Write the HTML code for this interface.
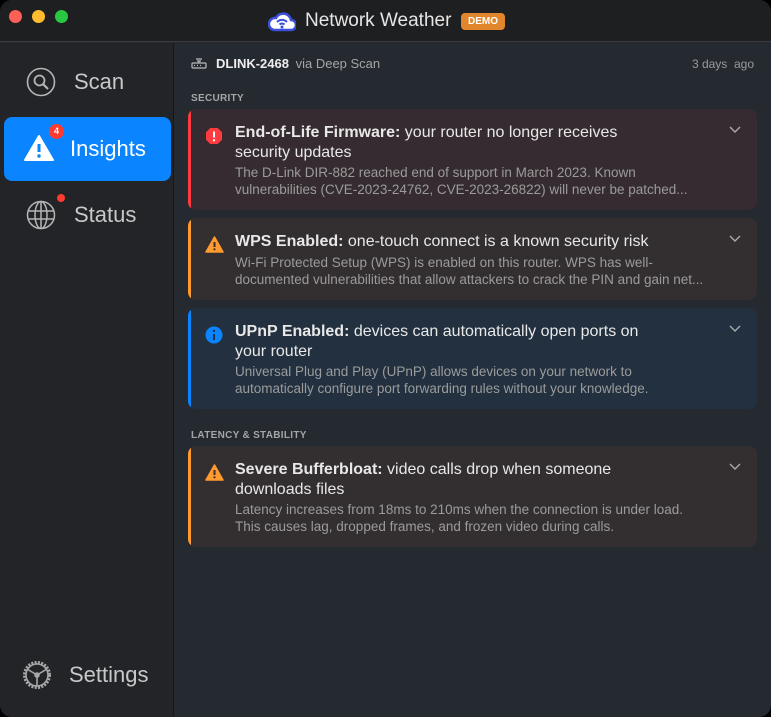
<!DOCTYPE html><html><head><style>
*{margin:0;padding:0;box-sizing:border-box}
body{width:771px;height:717px;background:#000;font-family:"Liberation Sans",sans-serif;overflow:hidden}
.win{position:absolute;left:0;top:0;width:771px;height:717px;border-radius:12px;overflow:hidden;background:#252a31}
.tb{position:absolute;left:0;top:0;width:771px;height:42px;background:#1e1f21;border-bottom:1px solid #3a3c40}
.dot{position:absolute;top:10px;width:13px;height:13px;border-radius:50%}
.side{position:absolute;left:0;top:43px;width:174px;height:674px;background:#222428;border-right:1px solid #15171a}
.item{position:absolute;left:4px;width:167px;height:64px;border-radius:8px;color:#c8c8c8;font-size:22px}
.item span{position:absolute;top:50%;transform:translateY(-50%)}
.card{position:absolute;left:188px;width:569px;border-radius:8px;overflow:hidden}
.card .bar{position:absolute;left:0;top:0;bottom:0;width:3px}
.card .t{position:absolute;left:47px;top:14px;width:500px;font-size:16px;line-height:19.5px;color:#e8e8e8;white-space:nowrap}
.card .t b{font-weight:bold}
.card .d{font-size:13.5px;line-height:17px;color:#9b9b9b;margin-top:2px}
.card .ic{position:absolute;left:17px;top:18px}
.card .ch{position:absolute;right:16px;top:17px}
.sec{position:absolute;left:191px;font-size:10px;font-weight:bold;color:#a5a5a5;letter-spacing:.3px}
</style></head><body><div class="win">
<div class="tb">
<div class="dot" style="left:9px;background:#fe5f57"></div>
<div class="dot" style="left:32px;background:#febc2e"></div>
<div class="dot" style="left:55px;background:#28c840"></div>
<svg style="position:absolute;left:268px;top:10px" width="28" height="22" viewBox="0 0 28 22"><path d="M6 20h17a5 5 0 0 0 0-10 8 8 0 0 0-15-2 6 6 0 0 0-2 12z" fill="#fff" stroke="#3b4fd8" stroke-width="2.5"/><path d="M9 12a7 7 0 0 1 10 0M11.5 14.5a3.5 3.5 0 0 1 5 0" stroke="#3b4fd8" stroke-width="2" fill="none"/><circle cx="14" cy="17" r="1.5" fill="#3b4fd8"/></svg>
<div style="position:absolute;left:305px;top:10px;font-size:19px;color:#e6e6e6">Network Weather</div>
<div style="position:absolute;left:461px;top:13px;width:44px;height:17px;background:#e2862d;border-radius:4px;color:#fff;font-size:10px;font-weight:bold;text-align:center;line-height:17px">DEMO</div>
</div>
<div class="side">
<div class="item" style="top:7px"><svg style="position:absolute;left:22px;top:17px" width="30" height="30" viewBox="0 0 30 30"><circle cx="15" cy="15" r="13.5" fill="none" stroke="#b5b5b5" stroke-width="1.6"/><circle cx="13.5" cy="13.5" r="5" fill="none" stroke="#b5b5b5" stroke-width="1.8"/><path d="M17 17l5 5" stroke="#b5b5b5" stroke-width="2.2"/></svg><span style="left:70px">Scan</span></div>
<div class="item" style="top:74px;background:#0a84ff;color:#fff"><svg style="position:absolute;left:19px;top:17px" width="32" height="28" viewBox="0 0 32 28"><path d="M16 2L30 26H2z" fill="#fff" stroke="#fff" stroke-width="2" stroke-linejoin="round"/><path d="M16 10v8" stroke="#0a84ff" stroke-width="3"/><circle cx="16" cy="22" r="1.7" fill="#0a84ff"/></svg><div style="position:absolute;left:45px;top:7px;width:15px;height:15px;border-radius:50%;background:#ff3b30;color:#fff;font-size:9px;font-weight:bold;text-align:center;line-height:15px">4</div><span style="left:66px">Insights</span></div>
<div class="item" style="top:140px"><svg style="position:absolute;left:22px;top:17px" width="30" height="30" viewBox="0 0 30 30" fill="none" stroke="#b5b5b5" stroke-width="1.5"><circle cx="15" cy="15" r="13.5"/><ellipse cx="15" cy="15" rx="6" ry="13.5"/><path d="M2 11h26M2 19h26M15 1.5v27"/></svg><div style="position:absolute;left:53px;top:11px;width:8px;height:8px;border-radius:50%;background:#ff3b30"></div><span style="left:70px">Status</span></div>
<div class="item" style="top:600px"><svg style="position:absolute;left:17px;top:16px" width="32" height="32" viewBox="0 0 32 32" fill="none" stroke="#a8a8a8" stroke-width="1.6"><circle cx="16" cy="16" r="12.5" stroke-dasharray="2 1.3" stroke-width="3"/><circle cx="16" cy="16" r="11"/><path d="M16 16L6 10M16 16l10-6M16 16v11"/><circle cx="16" cy="16" r="2" fill="#a8a8a8"/></svg><span style="left:65px">Settings</span></div>
</div>
<svg style="position:absolute;left:191px;top:56px" width="16" height="14" viewBox="0 0 16 14" fill="none" stroke="#bbb" stroke-width="1.2"><rect x="1" y="7" width="14" height="5" rx="1"/><path d="M6 5h4M5 3h6M8 7V5"/><path d="M3 9.5h1M6 9.5h1M9 9.5h1" /></svg>
<div style="position:absolute;left:216px;top:56px;font-size:13px;color:#eee"><b>DLINK-2468</b> <span style="color:#a5a5a5;margin-left:3px">via Deep Scan</span></div>
<div style="position:absolute;right:17px;top:57px;font-size:12px;color:#9a9a9a">3 days&nbsp; ago</div>
<div class="sec" style="top:93px">SECURITY</div>
<div class="card" style="top:109px;height:101px;background:#352b30"><div class="bar" style="background:#ff3b3f"></div>
<svg class="ic" width="18" height="18" viewBox="0 0 18 18"><path d="M5.3 1h7.4L17 5.3v7.4L12.7 17H5.3L1 12.7V5.3z" fill="#ff3b3f"/><path d="M9 4.5v6" stroke="#fff" stroke-width="2"/><circle cx="9" cy="13.3" r="1.2" fill="#fff"/></svg>
<div class="t"><b>End-of-Life Firmware:</b> your router no longer receives<br>security updates<div class="d">The D-Link DIR-882 reached end of support in March 2023. Known<br>vulnerabilities (CVE-2023-24762, CVE-2023-26822) will never be patched...</div></div>
<svg class="ch" width="12" height="8" viewBox="0 0 12 8"><path d="M1 1l5 5 5-5" stroke="#aaa" stroke-width="1.4" fill="none"/></svg></div>
<div class="card" style="top:218px;height:82px;background:#332f30"><div class="bar" style="background:#ff9a2e"></div>
<svg class="ic" width="19" height="17" viewBox="0 0 19 17"><path d="M9.5 1L18 16H1z" fill="#ff9a2e" stroke="#ff9a2e" stroke-linejoin="round" stroke-width="1.5"/><path d="M9.5 6v5" stroke="#332f30" stroke-width="2"/><circle cx="9.5" cy="13.3" r="1.1" fill="#332f30"/></svg>
<div class="t"><b>WPS Enabled:</b> one-touch connect is a known security risk<div class="d">Wi-Fi Protected Setup (WPS) is enabled on this router. WPS has well-<br>documented vulnerabilities that allow attackers to crack the PIN and gain net...</div></div>
<svg class="ch" width="12" height="8" viewBox="0 0 12 8"><path d="M1 1l5 5 5-5" stroke="#aaa" stroke-width="1.4" fill="none"/></svg></div>
<div class="card" style="top:308px;height:101px;background:#22303f"><div class="bar" style="background:#0a84ff"></div>
<svg class="ic" width="18" height="18" viewBox="0 0 18 18"><circle cx="9" cy="9" r="8.5" fill="#0a84ff"/><path d="M9 8v6" stroke="#22303f" stroke-width="2"/><circle cx="9" cy="5" r="1.2" fill="#22303f"/></svg>
<div class="t"><b>UPnP Enabled:</b> devices can automatically open ports on<br>your router<div class="d">Universal Plug and Play (UPnP) allows devices on your network to<br>automatically configure port forwarding rules without your knowledge.</div></div>
<svg class="ch" width="12" height="8" viewBox="0 0 12 8"><path d="M1 1l5 5 5-5" stroke="#aaa" stroke-width="1.4" fill="none"/></svg></div>
<div class="sec" style="top:430px">LATENCY &amp; STABILITY</div>
<div class="card" style="top:446px;height:101px;background:#332f30"><div class="bar" style="background:#ff9a2e"></div>
<svg class="ic" width="19" height="17" viewBox="0 0 19 17"><path d="M9.5 1L18 16H1z" fill="#ff9a2e" stroke="#ff9a2e" stroke-linejoin="round" stroke-width="1.5"/><path d="M9.5 6v5" stroke="#332f30" stroke-width="2"/><circle cx="9.5" cy="13.3" r="1.1" fill="#332f30"/></svg>
<div class="t"><b>Severe Bufferbloat:</b> video calls drop when someone<br>downloads files<div class="d">Latency increases from 18ms to 210ms when the connection is under load.<br>This causes lag, dropped frames, and frozen video during calls.</div></div>
<svg class="ch" width="12" height="8" viewBox="0 0 12 8"><path d="M1 1l5 5 5-5" stroke="#aaa" stroke-width="1.4" fill="none"/></svg></div>
</div></body></html>
